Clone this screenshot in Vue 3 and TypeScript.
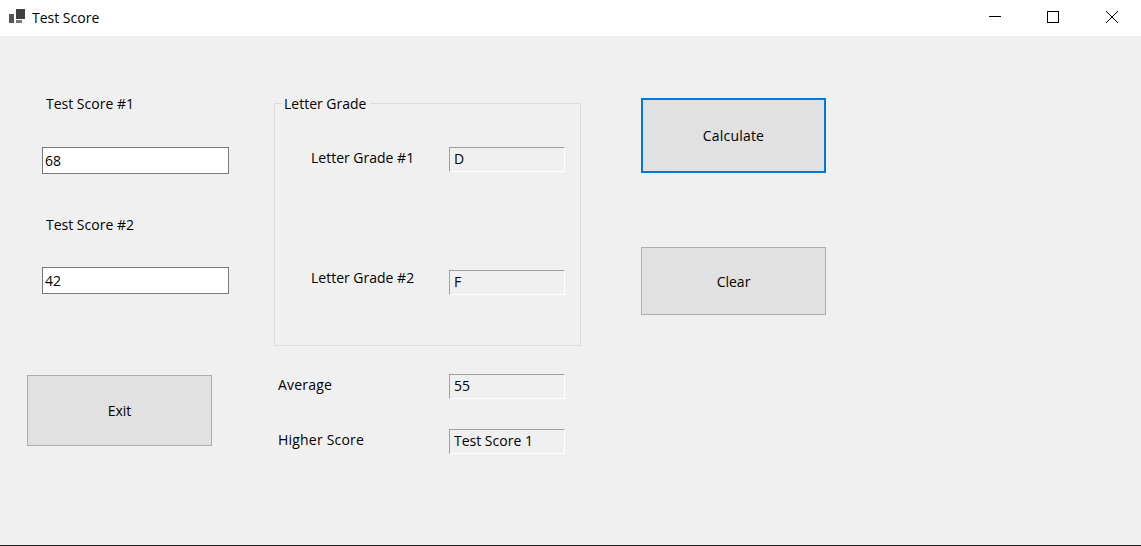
<script setup lang="ts">
import { computed, ref } from "vue";

const first = ref<string>("68");
const second = ref<string>("42");
const shown = ref<boolean>(true);

function letter(value: string): string {
  const n = Number(value);
  if (n >= 90) return "A";
  if (n >= 80) return "B";
  if (n >= 70) return "C";
  if (n >= 60) return "D";
  return "F";
}

const grade1 = computed(() => (shown.value ? letter(first.value) : ""));
const grade2 = computed(() => (shown.value ? letter(second.value) : ""));
const average = computed(() =>
  shown.value ? String((Number(first.value) + Number(second.value)) / 2) : ""
);
const higher = computed(() => {
  if (!shown.value) return "";
  return Number(first.value) >= Number(second.value) ? "Test Score 1" : "Test Score 2";
});

function clearAll(): void {
  first.value = "";
  second.value = "";
  shown.value = false;
}
</script>

<template>
  <div class="window">
    <header class="titlebar">
      <svg class="app-icon" width="16" height="14" viewBox="0 0 16 14">
        <rect x="0" y="5" width="5" height="9" fill="#555" />
        <rect x="7" y="0" width="9" height="10" fill="#404040" />
        <rect x="7" y="11" width="6" height="3" fill="#777" />
      </svg>
      <span class="title">Test Score</span>
      <div class="controls">
        <button class="control" aria-label="Minimize">
          <svg width="12" height="12" viewBox="0 0 12 12"><path d="M0 5.5H12" stroke="#000" fill="none" /></svg>
        </button>
        <button class="control" aria-label="Maximize">
          <svg width="12" height="12" viewBox="0 0 12 12"><rect x="0.5" y="0.5" width="11" height="11" stroke="#000" fill="none" /></svg>
        </button>
        <button class="control" aria-label="Close">
          <svg width="12" height="12" viewBox="0 0 12 12"><path d="M0 0L12 12M12 0L0 12" stroke="#000" fill="none" /></svg>
        </button>
      </div>
    </header>

    <main class="form">
      <section class="col-scores">
        <label class="score-label">Test Score #1</label>
        <input v-model="first" class="score-input" />
        <label class="score-label score-label--second">Test Score #2</label>
        <input v-model="second" class="score-input score-input--second" />
        <button class="btn btn--exit">Exit</button>
      </section>

      <section class="col-results">
        <fieldset class="group">
          <legend class="legend">Letter Grade</legend>
          <div class="row row--grade1">
            <span class="row-label">Letter Grade #1</span>
            <input class="out" :value="grade1" readonly />
          </div>
          <div class="row row--grade2">
            <span class="row-label">Letter Grade #2</span>
            <input class="out out--lowered" :value="grade2" readonly />
          </div>
        </fieldset>
        <div class="summary">
          <div class="row">
            <span class="row-label">Average</span>
            <input class="out" :value="average" readonly />
          </div>
          <div class="row row--higher">
            <span class="row-label">Higher Score</span>
            <input class="out" :value="higher" readonly />
          </div>
        </div>
      </section>

      <section class="col-actions">
        <button class="btn btn--calc" @click="shown = true">Calculate</button>
        <button class="btn btn--clear" @click="clearAll">Clear</button>
      </section>
    </main>
  </div>
</template>

<style>
html, body { margin: 0; padding: 0; }
</style>

<style scoped>
.window {
  box-sizing: border-box;
  width: 1141px;
  height: 546px;
  display: flex;
  flex-direction: column;
  overflow: hidden;
  background: #f0f0f0;
  border-bottom: 1px solid #222;
  font-family: "Open Sans", "Noto Sans", sans-serif;
  font-size: 14px;
  color: #000;
}
.titlebar {
  height: 36px;
  flex: none;
  display: flex;
  align-items: center;
  background: #fff;
  padding-left: 9px;
}
.app-icon { flex: none; margin-top: -4px; }
.title { margin-left: 7px; margin-top: -1px; }
.controls { margin-left: auto; display: flex; }
.control {
  width: 58.5px;
  height: 36px;
  padding: 0 0 2px;
  border: 0;
  background: transparent;
  display: flex;
  align-items: center;
  justify-content: center;
}
.form {
  flex: 1;
  display: flex;
  align-items: flex-start;
  padding: 58px 0 0 27px;
}
input {
  box-sizing: border-box;
  font: inherit;
  color: #000;
  outline: none;
  border-radius: 0;
}
.col-scores {
  width: 185px;
  display: flex;
  flex-direction: column;
  align-items: flex-start;
}
.score-label {
  height: 20px;
  line-height: 20px;
  margin-left: 19px;
}
.score-label--second { margin-top: 41px; }
.score-input {
  width: 187px;
  height: 27px;
  margin: 33px 0 0 15px;
  padding: 0 1px 1px 2px;
  border: 1px solid #7a7a7a;
  background: #fff;
}
.score-input--second { margin-top: 32px; }
.btn {
  box-sizing: border-box;
  width: 185px;
  padding: 0;
  border: 1px solid #adadad;
  border-radius: 0;
  background: #e1e1e1;
  color: #000;
  font: inherit;
}
.btn--exit { height: 71px; margin-top: 81px; }
.col-results {
  width: 307px;
  margin-left: 62px;
}
.group {
  box-sizing: border-box;
  height: 252px;
  margin: 0;
  padding: 0 0 0 36px;
  border: 1px solid #dcdcdc;
  min-width: 0;
}
.legend {
  height: 19px;
  line-height: 20px;
  margin-left: -29px;
  padding: 0 4px 0 2px;
}
.row {
  display: flex;
  align-items: flex-start;
}
.row-label {
  width: 138px;
  height: 22px;
  line-height: 22px;
  flex: none;
}
.row--grade1 { margin-top: 34px; }
.row--grade2 { margin-top: 95px; }
.out {
  width: 116px;
  height: 25px;
  padding: 0 2px 3px 4px;
  border-style: solid;
  border-width: 1px;
  border-color: #a0a0a0 #fff #fff #a0a0a0;
  background: #f0f0f0;
}
.out--lowered { margin-top: 3px; }
.summary {
  margin-top: 28px;
  padding-left: 4px;
}
.summary .row-label { width: 171px; letter-spacing: 0.2px; }
.row--higher { margin-top: 30px; }
.col-actions {
  margin-left: 60px;
  padding-top: 4px;
  display: flex;
  flex-direction: column;
}
.btn--calc {
  height: 75px;
  border: 2px solid #0078d7;
  letter-spacing: 0.2px;
}
.btn--clear {
  height: 68px;
  margin-top: 74px;
}
</style>
